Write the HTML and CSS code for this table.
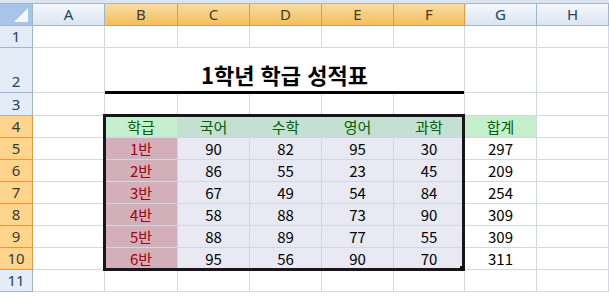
FILE: index.html
```html
<!DOCTYPE html>
<html lang="ko">
<head>
<meta charset="utf-8">
<title>1학년 학급 성적표</title>
<link rel="stylesheet" href="styles.css">
</head>
<body>
<div class="topbar"></div>
<div class="sheet">
  <div class="corner"><svg class="tri" width="14" height="14" viewBox="0 0 14 14"><polygon points="14,0 14,14 0,14" fill="#f4f7fb"/></svg></div>
  <div class="ch">A</div><div class="ch sel">B</div><div class="ch sel">C</div><div class="ch sel">D</div><div class="ch sel">E</div><div class="ch sel">F</div><div class="ch">G</div><div class="ch">H</div>

  <div class="rh">1</div><div class="c"></div><div class="c"></div><div class="c"></div><div class="c"></div><div class="c"></div><div class="c"></div><div class="c"></div><div class="c"></div>

  <div class="rh bottom">2</div><div class="c"></div><div class="c title">1학년 학급 성적표</div><div class="c"></div><div class="c"></div>

  <div class="rh">3</div><div class="c"></div><div class="c"></div><div class="c"></div><div class="c"></div><div class="c"></div><div class="c"></div><div class="c"></div><div class="c"></div>

  <div class="rh sel">4</div><div class="c"></div><div class="c hd">학급</div><div class="c hd t">국어</div><div class="c hd t">수학</div><div class="c hd t">영어</div><div class="c hd t">과학</div><div class="c hd">합계</div><div class="c"></div>

  <div class="rh sel">5</div><div class="c"></div><div class="c cls">1반</div><div class="c n">90</div><div class="c n">82</div><div class="c n">95</div><div class="c n">30</div><div class="c">297</div><div class="c"></div>
  <div class="rh sel">6</div><div class="c"></div><div class="c cls">2반</div><div class="c n">86</div><div class="c n">55</div><div class="c n">23</div><div class="c n">45</div><div class="c">209</div><div class="c"></div>
  <div class="rh sel">7</div><div class="c"></div><div class="c cls">3반</div><div class="c n">67</div><div class="c n">49</div><div class="c n">54</div><div class="c n">84</div><div class="c">254</div><div class="c"></div>
  <div class="rh sel">8</div><div class="c"></div><div class="c cls">4반</div><div class="c n">58</div><div class="c n">88</div><div class="c n">73</div><div class="c n">90</div><div class="c">309</div><div class="c"></div>
  <div class="rh sel">9</div><div class="c"></div><div class="c cls">5반</div><div class="c n">88</div><div class="c n">89</div><div class="c n">77</div><div class="c n">55</div><div class="c">309</div><div class="c"></div>
  <div class="rh sel">10</div><div class="c"></div><div class="c cls">6반</div><div class="c n">95</div><div class="c n">56</div><div class="c n">90</div><div class="c n">70</div><div class="c">311</div><div class="c"></div>

  <div class="rh">11</div><div class="c"></div><div class="c"></div><div class="c"></div><div class="c"></div><div class="c"></div><div class="c"></div><div class="c"></div><div class="c"></div>

  <div class="selection"><span class="handle"></span></div>
</div>
</body>
</html>
```
FILE: styles.css
```css
html, body {
  margin: 0;
  padding: 0;
  background: #ffffff;
}
body {
  width: 609px;
  height: 296px;
  overflow: hidden;
  font-family: "Noto Sans CJK KR", "Noto Sans", sans-serif;
}
.topbar {
  height: 3px;
  background: #dfe5ee;
}
.sheet {
  position: relative;
  display: grid;
  grid-template-columns: 32px 71px 72px 71px 71px 71px 70px 71px 71px;
  grid-template-rows: 21px 21px 44px 22px 21px 21px 21px 21px 21px 21px 21px 21px;
  gap: 1px;
  width: 608px;
  padding: 0 1px 1px 0;
  background: #d0d7e5;
  border-top: 1px solid #9eb6ce;
}
.sheet > div {
  display: flex;
  align-items: center;
  justify-content: center;
  font-size: 15px;
  line-height: 1;
  color: #000;
}
.corner {
  position: relative;
  background: #a9c4e9;
  box-shadow: 1px 0 0 #9eb6ce, 0 1px 0 #9eb6ce, 1px 1px 0 #9eb6ce;
}
.corner .tri {
  position: absolute;
  right: 4px;
  bottom: 3px;
}
.ch {
  background: linear-gradient(#f6f9fd, #dbe4f0);
  color: #27415f !important;
  font-family: "Noto Sans", sans-serif;
  box-shadow: 1px 0 0 #9eb6ce, 0 1px 0 #9eb6ce, 1px 1px 0 #9eb6ce;
}
.ch.sel {
  background: linear-gradient(#f9dba3, #f1c15f);
  color: #4a3a20 !important;
  box-shadow: 1px 0 0 #f29536, 0 1px 0 #f29536, 1px 1px 0 #f29536;
}
.rh {
  background: #e4ecf7;
  color: #27415f !important;
  font-family: "Noto Sans", sans-serif;
  box-shadow: 1px 0 0 #9eb6ce, 0 1px 0 #9eb6ce, 1px 1px 0 #9eb6ce;
}
.rh.bottom {
  align-items: flex-end !important;
  padding-bottom: 3px;
  box-sizing: border-box;
}
.rh.sel {
  background: #ffd58d;
  color: #3a3a30 !important;
  box-shadow: 1px 0 0 #f29536, 0 1px 0 #f29536, 1px 1px 0 #f29536;
}
.c {
  background: #ffffff;
}
.title {
  grid-column: 3 / span 5;
  position: relative;
  z-index: 1;
  align-items: flex-end !important;
  padding-bottom: 7px;
  box-sizing: border-box;
  font-size: 22px !important;
  font-weight: 700;
  box-shadow: inset 0 -1px 0 #000, 0 2px 0 #000;
}
.hd {
  background: #c6efce;
  color: #006100 !important;
}
.hd.t {
  background: #c3e0d3;
}
.cls {
  background: #d2afb9;
  color: #a8000f !important;
}
.n {
  background: #e8e9f3;
}
.selection {
  position: absolute;
  grid-column: 3 / span 5;
  grid-row: 5 / span 7;
  top: -2px;
  left: -2px;
  right: -1px;
  bottom: -2px;
  z-index: 2;
  border: 3px solid #1c141c;
  pointer-events: none;
}
.handle {
  position: absolute;
  right: -4px;
  bottom: -4px;
  width: 5px;
  height: 5px;
  background: #111;
  border-right: 1px solid #fff;
  border-bottom: 1px solid #fff;
}
```
